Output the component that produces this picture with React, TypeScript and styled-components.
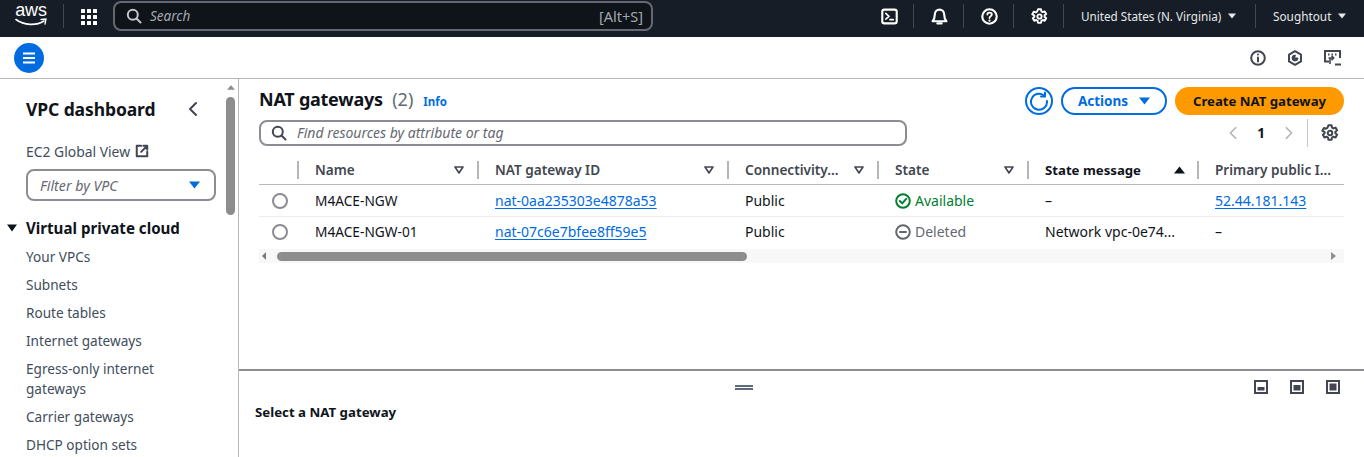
import React, { FC } from "react";
import styled, { createGlobalStyle } from "styled-components";

const GlobalStyle = createGlobalStyle`
  html, body {
    margin: 0;
    height: 100%;
    overflow: hidden;
    background: #fff;
    font-family: "Noto Sans", "Open Sans", sans-serif;
    color: #0f141a;
  }
  * { box-sizing: border-box; }
`;

const Page = styled.div`
  width: 1364px;
  height: 457px;
  display: flex;
  flex-direction: column;
  overflow: hidden;
`;

/* top navigation */
const TopNav = styled.header`
  height: 37px;
  flex: none;
  background: #161d26;
  display: flex;
  align-items: center;
  padding-bottom: 5px;
  color: #fff;
`;

const LogoLink = styled.div`
  width: 48px;
  margin-left: 7px;
  display: flex;
  flex-direction: column;
  align-items: center;
  height: 28px;
  padding-top: 1px;
`;

const LogoText = styled.span`
  font-family: "Liberation Sans", sans-serif;
  font-size: 18px;
  line-height: 15px;
  letter-spacing: -0.2px;
  color: #fff;
`;

const NavDivider = styled.span<{ $left?: number; $right?: number }>`
  width: 1px;
  height: 24px;
  background: #414750;
  flex: none;
  margin-left: ${(p) => p.$left ?? 0}px;
  margin-right: ${(p) => p.$right ?? 0}px;
`;

const GlobalSearch = styled.div`
  width: 540px;
  height: 30px;
  margin-left: 16px;
  border: 2px solid #656871;
  border-radius: 8px;
  background: #0f141a;
  display: flex;
  align-items: center;
  padding: 0 8px 0 11px;
  gap: 8px;
  font-size: 13.5px;
  color: #a4a7ad;
`;

const SearchHint = styled.span`
  font-style: italic;
  flex: 1;
`;

const ShortcutHint = styled.span`
  font-size: 14.5px;
`;

const NavActions = styled.div`
  margin-left: auto;
  display: flex;
  align-items: center;
`;

const NavIconSlot = styled.span`
  width: 49px;
  padding-left: 1px;
  display: flex;
  justify-content: center;
  align-items: center;
`;

const NavLabel = styled.span<{ $width: number; $size: number }>`
  width: ${(p) => p.$width}px;
  padding-left: 17px;
  display: flex;
  align-items: center;
  gap: 7px;
  font-size: ${(p) => p.$size}px;
  color: #e6e8ea;
  white-space: nowrap;
`;

/* bar under the navigation */
const SubBar = styled.div`
  height: 42px;
  flex: none;
  border-bottom: 1px solid #b8b8bd;
  display: flex;
  align-items: center;
  padding: 0 23px 0 14px;
`;

const MenuButton = styled.span`
  width: 30px;
  height: 30px;
  border-radius: 50%;
  background: #006ce0;
  display: flex;
  align-items: center;
  justify-content: center;
`;

const SubBarIcons = styled.div`
  margin-left: auto;
  display: flex;
  gap: 21px;
  align-items: center;
`;

const Body = styled.div`
  flex: 1;
  display: flex;
  min-height: 0;
`;

/* side navigation */
const Sidebar = styled.aside`
  width: 239px;
  flex: none;
  border-right: 1px solid #b8b8bd;
  display: flex;
  overflow: hidden;
`;

const SideContent = styled.nav`
  flex: 1;
  min-width: 0;
  padding-top: 19px;
`;

const SideTitleRow = styled.div`
  display: flex;
  align-items: center;
  justify-content: space-between;
  padding: 0 23px 0 26px;
  height: 22px;
`;

const SideTitle = styled.h2`
  margin: 0;
  font-size: 17.5px;
  font-weight: 700;
  line-height: 22px;
  letter-spacing: -0.1px;
`;

const GlobalView = styled.div`
  display: flex;
  align-items: center;
  gap: 5px;
  margin: 21px 0 0 26px;
  height: 20px;
  font-size: 13.9px;
  color: #414d5c;
`;

const VpcFilter = styled.div`
  width: 190px;
  height: 32px;
  margin: 8px 0 0 26px;
  border: 2px solid #8c8c94;
  border-radius: 8px;
  display: flex;
  align-items: center;
  justify-content: space-between;
  padding: 0 14px 0 12px;
  font-size: 14.2px;
  font-style: italic;
  color: #656871;
`;

const SectionHeader = styled.div`
  display: flex;
  align-items: center;
  margin: 16px 0 8px 7px;
  gap: 9px;
  height: 22px;
  font-size: 15.1px;
  font-weight: 700;
`;

const SideList = styled.ul`
  list-style: none;
  margin: 0;
  padding: 0 0 0 26px;
  width: 170px;
  box-sizing: content-box;
`;

const SideItem = styled.li`
  font-size: 13.6px;
  line-height: 20px;
  margin-bottom: 8px;
  color: #414d5c;
`;

const ScrollTrack = styled.div`
  width: 14px;
  flex: none;
  padding: 6px 1px 0 0;
  display: flex;
  flex-direction: column;
  align-items: center;
`;

const ScrollThumb = styled.div`
  width: 9px;
  height: 118px;
  margin-top: 7px;
  border-radius: 5px;
  background: #8d8d8d;
`;

/* main column */
const Main = styled.main`
  flex: 1;
  min-width: 0;
  display: flex;
  flex-direction: column;
`;

const TablePanel = styled.section`
  flex: 1;
  min-height: 0;
  padding: 8px 20px 0;
`;

const HeaderRow = styled.div`
  display: flex;
  justify-content: space-between;
  align-items: center;
  height: 28px;
`;

const TitleGroup = styled.div`
  display: flex;
  align-items: center;
  gap: 9px;
  margin-bottom: 4px;
`;

const Title = styled.h1`
  margin: 0;
  font-size: 18px;
  font-weight: 700;
  letter-spacing: -0.25px;
`;

const Count = styled.span`
  font-weight: 400;
  color: #656871;
  margin-left: 5px;
  letter-spacing: 0;
`;

const InfoLink = styled.span`
  font-size: 11.5px;
  font-weight: 700;
  color: #006ce0;
  margin: 5px 0 0 1px;
`;

const ActionGroup = styled.div`
  display: flex;
  align-items: center;
  gap: 8px;
`;

const IconButton = styled.span`
  width: 28px;
  height: 28px;
  border: 2px solid #006ce0;
  border-radius: 50%;
  display: flex;
  align-items: center;
  justify-content: center;
`;

const OutlineButton = styled.span`
  width: 106px;
  height: 28px;
  border: 2px solid #006ce0;
  border-radius: 14px;
  display: flex;
  align-items: center;
  justify-content: center;
  gap: 11px;
  font-size: 13.5px;
  font-weight: 700;
  color: #006ce0;
`;

const PrimaryButton = styled.span`
  width: 169px;
  height: 28px;
  border-radius: 14px;
  background: #ff9900;
  display: flex;
  align-items: center;
  justify-content: center;
  font-size: 13.2px;
  font-weight: 700;
  color: #0f141a;
`;

const FilterRow = styled.div`
  display: flex;
  justify-content: space-between;
  align-items: center;
  margin-top: 5px;
  height: 26px;
`;

const FindInput = styled.div`
  width: 648px;
  height: 26px;
  border: 2px solid #8c8c94;
  border-radius: 8px;
  display: flex;
  align-items: center;
  gap: 10px;
  padding-left: 10px;
  font-size: 14px;
  font-style: italic;
  color: #656871;
`;

const FindHint = styled.span`
  margin-bottom: 2px;
`;

const Pagination = styled.div`
  display: flex;
  align-items: center;
  height: 28px;
  margin-right: 5px;
`;

const PageCell = styled.span`
  width: 28px;
  display: flex;
  justify-content: center;
  font-size: 13.5px;
  font-weight: 700;
`;

const PagerDivider = styled.span`
  width: 1px;
  height: 28px;
  background: #c6c6cd;
  margin: 0 13px 0 4px;
`;

const TableGrid = styled.div`
  margin-top: 9px;
  font-size: 14px;
`;

const COLUMNS = "39px 180px 250px 150px 150px 170px 146px";

const HeadRow = styled.div`
  display: grid;
  grid-template-columns: ${COLUMNS};
  height: 30px;
  align-items: center;
  border-bottom: 1px solid #b8b8bd;
`;

const HeadCell = styled.div<{ $active?: boolean }>`
  height: 18px;
  display: flex;
  align-items: center;
  justify-content: space-between;
  padding: 0 ${(p) => (p.$active ? 13 : 14)}px 0 16px;
  font-weight: ${(p) => (p.$active ? 700 : 600)};
  font-size: ${(p) => (p.$active ? 13.2 : 13.6)}px;
  white-space: nowrap;
  color: ${(p) => (p.$active ? "#0f141a" : "#424650")};
  border-left: 2px solid #b4b4bb;
  margin-left: -1px;
`;

const EmptyHead = styled.div`
  height: 18px;
`;

const DataRow = styled.div<{ $last?: boolean }>`
  display: grid;
  grid-template-columns: ${COLUMNS};
  height: 32px;
  padding-bottom: ${(p) => (p.$last ? 3 : 0)}px;
  align-items: center;
  border-bottom: ${(p) => (p.$last ? "none" : "1px solid #ebebf0")};
`;

const RadioCell = styled.div`
  padding-left: 13px;
  display: flex;
`;

const Radio = styled.span`
  width: 16px;
  height: 16px;
  border: 2px solid #8c8c94;
  border-radius: 50%;
`;

const Cell = styled.div`
  padding-left: 17px;
  display: flex;
  align-items: center;
  white-space: nowrap;
  color: #0f141a;
  font-size: 14px;
`;

const NameCell = styled(Cell)`
  font-size: 13.7px;
`;

const LinkText = styled.span`
  color: #006ce0;
  text-decoration: underline;
  text-underline-offset: 2px;
`;

const Status = styled.span<{ $color: string }>`
  display: inline-flex;
  align-items: center;
  gap: 4px;
  color: ${(p) => p.$color};
`;

const HScroll = styled.div`
  height: 14px;
  background: #f8f8f8;
  display: flex;
  align-items: center;
  padding-right: 8px;
`;

const HThumb = styled.div`
  width: 470px;
  height: 9px;
  border-radius: 5px;
  background: #8d8d8d;
  margin-left: 11px;
`;

const ArrowLeft = styled.span`
  width: 0;
  height: 0;
  margin-left: 3px;
  border-top: 4px solid transparent;
  border-bottom: 4px solid transparent;
  border-right: 4px solid #7a7a7a;
`;

const ArrowRight = styled.span`
  width: 0;
  height: 0;
  margin-left: auto;
  border-top: 4px solid transparent;
  border-bottom: 4px solid transparent;
  border-left: 5px solid #8d8d8d;
`;

/* split panel */
const SplitPanel = styled.section`
  height: 88px;
  flex: none;
  border-top: 2px solid #8c8c94;
  padding: 0 16px;
`;

const SplitTop = styled.div`
  display: flex;
  align-items: center;
  height: 32px;
`;

const DragHandle = styled.span`
  width: 18px;
  height: 5px;
  border-top: 2px solid #5f6b7a;
  border-bottom: 2px solid #5f6b7a;
  margin-left: 480px;
`;

const PanelIcons = styled.div`
  margin-left: auto;
  display: flex;
  gap: 22px;
  padding-right: 8px;
`;

const SplitTitle = styled.div`
  margin-top: -1px;
  font-size: 13.25px;
  font-weight: 700;
  line-height: 20px;
`;

/* icons */
const Glyph: FC<{ size?: number; color?: string; sw?: number; children: React.ReactNode }> = ({
  size = 16,
  color = "#fff",
  sw = 2,
  children,
}) => (
  <svg width={size} height={size} viewBox="0 0 16 16" fill="none" stroke={color} strokeWidth={sw} strokeLinecap="round" strokeLinejoin="round">
    {children}
  </svg>
);

const Caret: FC<{ color: string; w?: number; h?: number; up?: boolean }> = ({ color, w = 10, h = 7, up }) => (
  <svg width={w} height={h} viewBox="0 0 10 7" preserveAspectRatio="none">
    <path d={up ? "M5 0.5 L10 6.5 L0 6.5 Z" : "M0 0.5 L10 0.5 L5 6.5 Z"} fill={color} />
  </svg>
);

const FilterCaret: FC = () => (
  <svg width="10" height="8" viewBox="0 0 10 8" fill="none" stroke="#424650" strokeWidth="1.6">
    <path d="M1 1 H9 L5 7 Z" strokeLinejoin="round" />
  </svg>
);

const Gear: FC<{ color: string; size?: number }> = ({ color, size = 16 }) => (
  <Glyph size={size} color={color} sw={1.8}>
    <path d="M6.6 1.2h2.8l.4 2 1.2.7 1.9-.7 1.4 2.4-1.5 1.3v1.4l1.5 1.3-1.4 2.4-1.9-.7-1.2.7-.4 2H6.6l-.4-2-1.2-.7-1.9.7-1.4-2.4 1.5-1.3V7.2L1.2 5.9l1.4-2.4 1.9.7 1.2-.7z" />
    <circle cx="8" cy="8" r="2" />
  </Glyph>
);

const SearchGlyph: FC<{ color: string }> = ({ color }) => (
  <Glyph size={16} color={color}>
    <circle cx="6.8" cy="6.8" r="5" />
    <path d="M10.5 10.5 L14.5 14.5" />
  </Glyph>
);

const PanelGlyph: FC<{ top: number }> = ({ top }) => (
  <svg width="14" height="14" viewBox="0 0 14 14">
    <rect x="1" y="1" width="12" height="12" fill="none" stroke="#424650" strokeWidth="2" />
    <rect x="3.5" y={top} width="7" height={10.5 - top} fill="#424650" />
  </svg>
);

const COLUMN_TITLES = ["Name", "NAT gateway ID", "Connectivity...", "State"];
const SIDE_ITEMS = [
  "Your VPCs",
  "Subnets",
  "Route tables",
  "Internet gateways",
  "Egress-only internet gateways",
  "Carrier gateways",
  "DHCP option sets",
];

const App: FC = () => (
  <Page>
    <GlobalStyle />
    <TopNav>
      <LogoLink>
        <LogoText>aws</LogoText>
        <svg width="32" height="9" viewBox="0 0 32 9" fill="none" stroke="#fff" strokeWidth="1.6" strokeLinecap="round">
          <path d="M1 1.5 C9 7.5 21 8 29 3" />
          <path d="M26 1.5 L31 1 L30 6" strokeWidth="1.3" />
        </svg>
      </LogoLink>
      <NavDivider $left={8} $right={16} />
      <svg width="17" height="17" viewBox="0 0 17 17" fill="#fff">
        {[0, 6, 12].map((y) =>
          [0, 6, 12].map((x) => <rect key={`${x}-${y}`} x={x + 1} y={y + 1} width="4" height="4" rx="0.5" />),
        )}
      </svg>
      <GlobalSearch>
        <SearchGlyph color="#c6c6cd" />
        <SearchHint>Search</SearchHint>
        <ShortcutHint>[Alt+S]</ShortcutHint>
      </GlobalSearch>
      <NavActions>
        <NavIconSlot>
          <Glyph size={17}>
            <rect x="1.2" y="1.5" width="13.6" height="13" rx="2" />
            <path d="M4.5 5 L7.5 7.8 L4.5 10.4 M8.5 11 H11.5" strokeWidth="1.6" />
          </Glyph>
        </NavIconSlot>
        <NavDivider />
        <NavIconSlot>
          <Glyph size={17}>
            <path d="M1.5 12.5 C3 11 3.5 10 3.5 6.5 C3.5 3.5 5.5 1.5 8 1.5 C10.5 1.5 12.5 3.5 12.5 6.5 C12.5 10 13 11 14.5 12.5 Z" />
            <path d="M6 14.5 H10" />
          </Glyph>
        </NavIconSlot>
        <NavDivider />
        <NavIconSlot>
          <Glyph size={17}>
            <circle cx="8" cy="8" r="6.8" />
            <path d="M6 6.2 C6 3.8 10.2 3.8 10.2 6.2 C10.2 7.8 8 7.8 8 9.4" strokeWidth="1.7" />
            <path d="M8 11.8 V11.9" />
          </Glyph>
        </NavIconSlot>
        <NavDivider />
        <NavIconSlot>
          <Gear color="#fff" size={17} />
        </NavIconSlot>
        <NavDivider />
        <NavLabel $width={191} $size={11.7}>
          United States (N. Virginia) <Caret color="#e6e8ea" w={8} h={6} />
        </NavLabel>
        <NavDivider />
        <NavLabel $width={108} $size={11.8}>
          Soughtout <Caret color="#e6e8ea" w={8} h={6} />
        </NavLabel>
      </NavActions>
    </TopNav>

    <SubBar>
      <MenuButton>
        <svg width="14" height="12" viewBox="0 0 14 12" stroke="#fff" strokeWidth="2">
          <path d="M1 1.5 H13 M1 6 H13 M1 10.5 H13" />
        </svg>
      </MenuButton>
      <SubBarIcons>
        <Glyph color="#424650">
          <circle cx="8" cy="8" r="6.8" />
          <path d="M8 7.5 V11.5 M8 4.4 V4.6" />
        </Glyph>
        <Glyph color="#424650">
          <path d="M8 1.2 L14 4.6 V11.4 L8 14.8 L2 11.4 V4.6 Z" />
          <path d="M8 5 A3 3 0 1 0 11 8 H8 Z" fill="#424650" strokeWidth="1" />
        </Glyph>
        <svg width="17" height="16" viewBox="0 0 17 16" fill="none" stroke="#424650" strokeWidth="2">
          <path d="M5 11.5 H1 V1 H16 V8" />
          <path d="M4 4.5 H5.5 M7.5 4.5 H9 M11 4.5 H12.5" />
          <path d="M4.5 8 H9.5 M7.5 5.8 L9.7 8 L7.5 10.2 M6 8 V14" strokeWidth="1.6" />
          <path d="M11 14.5 H17" />
        </svg>
      </SubBarIcons>
    </SubBar>

    <Body>
      <Sidebar>
        <SideContent>
          <SideTitleRow>
            <SideTitle>VPC dashboard</SideTitle>
            <Glyph size={16} color="#424650">
              <path d="M11 2 L5 8 L11 14" />
            </Glyph>
          </SideTitleRow>
          <GlobalView>
            EC2 Global View
            <Glyph size={14} color="#424650" sw={2.3}>
              <path d="M7 2 H2 V14 H14 V9" />
              <path d="M7 9 L14 2 M9.5 2 H14 V6.5" />
            </Glyph>
          </GlobalView>
          <VpcFilter>
            Filter by VPC
            <Caret color="#006ce0" w={11} h={8} />
          </VpcFilter>
          <SectionHeader>
            <Caret color="#0f141a" w={10} h={8} />
            Virtual private cloud
          </SectionHeader>
          <SideList>
            {SIDE_ITEMS.map((item) => (
              <SideItem key={item}>{item}</SideItem>
            ))}
          </SideList>
        </SideContent>
        <ScrollTrack>
          <Caret color="#8d8d8d" w={8} h={5} up />
          <ScrollThumb />
        </ScrollTrack>
      </Sidebar>

      <Main>
        <TablePanel>
          <HeaderRow>
            <TitleGroup>
              <Title>
                NAT gateways <Count>(2)</Count>
              </Title>
              <InfoLink>Info</InfoLink>
            </TitleGroup>
            <ActionGroup>
              <IconButton>
                <svg width="20" height="20" viewBox="0 0 20 20" fill="none" stroke="#006ce0" strokeWidth="2" strokeLinecap="round" strokeLinejoin="round">
                  <path d="M15.8 5.2 A8 8 0 1 0 18 10" />
                  <path d="M16 1.5 V5.5 H12" />
                </svg>
              </IconButton>
              <OutlineButton>
                Actions <Caret color="#006ce0" w={11} h={8} />
              </OutlineButton>
              <PrimaryButton>Create NAT gateway</PrimaryButton>
            </ActionGroup>
          </HeaderRow>

          <FilterRow>
            <FindInput>
              <SearchGlyph color="#424650" />
              <FindHint>Find resources by attribute or tag</FindHint>
            </FindInput>
            <Pagination>
              <PageCell>
                <Glyph size={14} color="#b4b4bb">
                  <path d="M11 2 L5 8 L11 14" />
                </Glyph>
              </PageCell>
              <PageCell>1</PageCell>
              <PageCell>
                <Glyph size={14} color="#b4b4bb">
                  <path d="M5 2 L11 8 L5 14" />
                </Glyph>
              </PageCell>
              <PagerDivider />
              <Gear color="#424650" size={18} />
            </Pagination>
          </FilterRow>

          <TableGrid>
            <HeadRow>
              <EmptyHead />
              {COLUMN_TITLES.map((title) => (
                <HeadCell key={title}>
                  {title}
                  <FilterCaret />
                </HeadCell>
              ))}
              <HeadCell $active>
                State message
                <Caret color="#0f141a" w={11} h={8} up />
              </HeadCell>
              <HeadCell>Primary public I...</HeadCell>
            </HeadRow>
            <DataRow>
              <RadioCell>
                <Radio />
              </RadioCell>
              <NameCell>M4ACE-NGW</NameCell>
              <Cell>
                <LinkText>nat-0aa235303e4878a53</LinkText>
              </Cell>
              <Cell>Public</Cell>
              <Cell>
                <Status $color="#00802f">
                  <Glyph size={16} color="#00802f">
                    <circle cx="8" cy="8" r="6.8" />
                    <path d="M4.8 8 L7.2 10.4 L11.2 5.8" />
                  </Glyph>
                  Available
                </Status>
              </Cell>
              <Cell>–</Cell>
              <Cell>
                <LinkText>52.44.181.143</LinkText>
              </Cell>
            </DataRow>
            <DataRow $last>
              <RadioCell>
                <Radio />
              </RadioCell>
              <NameCell>M4ACE-NGW-01</NameCell>
              <Cell>
                <LinkText>nat-07c6e7bfee8ff59e5</LinkText>
              </Cell>
              <Cell>Public</Cell>
              <Cell>
                <Status $color="#656871">
                  <Glyph size={16} color="#656871">
                    <circle cx="8" cy="8" r="6.8" />
                    <path d="M5 8 H11" />
                  </Glyph>
                  Deleted
                </Status>
              </Cell>
              <Cell>Network vpc-0e74...</Cell>
              <Cell>–</Cell>
            </DataRow>
            <HScroll>
              <ArrowLeft />
              <HThumb />
              <ArrowRight />
            </HScroll>
          </TableGrid>
        </TablePanel>

        <SplitPanel>
          <SplitTop>
            <DragHandle />
            <PanelIcons>
              <PanelGlyph top={7} />
              <PanelGlyph top={5} />
              <PanelGlyph top={3.5} />
            </PanelIcons>
          </SplitTop>
          <SplitTitle>Select a NAT gateway</SplitTitle>
        </SplitPanel>
      </Main>
    </Body>
  </Page>
);

export default App;
